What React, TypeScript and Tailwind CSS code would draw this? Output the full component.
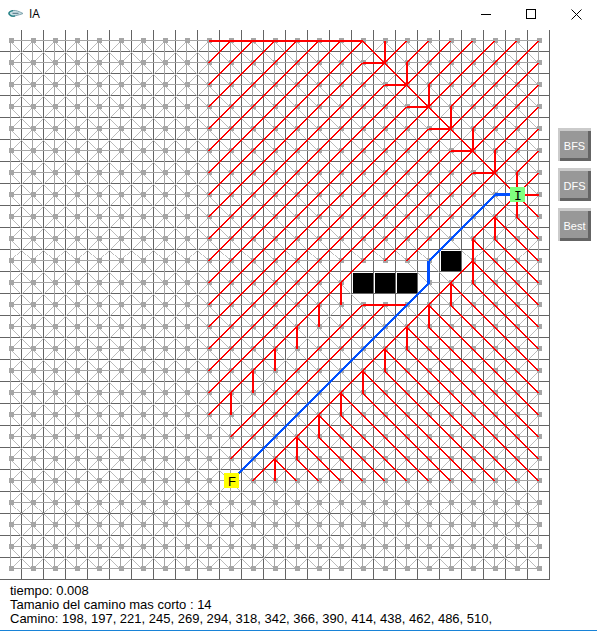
import React from "react";

type Segment = [number, number, number, number];

const SIZE = 25;
const CELL = 22;
const WALLS = [291, 292, 293, 270];
const PATH = [198, 197, 221, 245, 269, 294, 318, 342, 366, 390, 414, 438, 462, 486, 510];
const AXIS = Array.from({ length: SIZE }, (_, i) => i);

const col = (id: number) => id % SIZE;
const row = (id: number) => Math.floor(id / SIZE);
const isWall = (c: number, r: number) => WALLS.includes(r * SIZE + c);

/** Lines between every pair of neighbouring free nodes. */
function gridEdges(): { straight: string; diagonal: string } {
  let straight = "";
  let diagonal = "";
  const steps = [[1, 0], [0, 1], [1, 1], [-1, 1]];
  for (const r of AXIS) {
    for (const c of AXIS) {
      if (isWall(c, r)) continue;
      for (const [dc, dr] of steps) {
        const c2 = c + dc;
        const r2 = r + dr;
        if (c2 < 0 || c2 >= SIZE || r2 >= SIZE || isWall(c2, r2)) continue;
        const d = `M${10.5 + c * CELL} ${10.5 + r * CELL}l${dc * CELL} ${dr * CELL}`;
        if (dc !== 0 && dr !== 0) diagonal += d;
        else straight += d;
      }
    }
  }
  return { straight, diagonal };
}

/** Search tree, as runs of [column, row, column, row]. */
function searchTree(): Segment[] {
  const tree: Segment[] = [
    [9, 0, 16, 0],
    [16, 0, 23, 7],
    [16, 12, 18, 12],
    [23, 7, 24, 7],
    [23, 7, 21, 9],
    [21, 9, 21, 11],
    [21, 10, 11, 20],
    [22, 8, 22, 9],
    [23, 7, 23, 8],
    [21, 6, 17, 10],
    [22, 6, 18, 10],
    [16, 12, 10, 18],
    [17, 12, 10, 19],
  ];
  for (let c = 10; c <= 16; c++) tree.push([c, 0, 9, c - 9]);
  for (let c = 17; c <= 23; c++) {
    const r = c - 16;
    tree.push([c, r - 1, c, r]);
    if (c < 23) tree.push([c - 1, r, c, r]);
    if (c < 22) {
      tree.push([c - 1, r, 9, r + c - 10]);
      tree.push([c, r, 9, r + c - 9]);
    }
    const up = Math.min(r, 24 - c);
    tree.push([c, r, c + up, r - up]);
    const upper = Math.min(r - 1, 24 - c);
    if (upper > 0) tree.push([c, r - 1, c + upper, r - 1 - upper]);
  }
  for (let c = 10; c <= 15; c++) tree.push([c, 26 - c, c, 27 - c]);
  for (let c = 12; c <= 20; c++) tree.push([c, 31 - c, c, 32 - c]);
  const branches = [[23, 7], [23, 8], [22, 8], [22, 9], [21, 9], [21, 10], [21, 11]];
  for (let c = 12; c <= 20; c++) branches.push([c, 31 - c], [c, 32 - c]);
  for (const [c, r] of branches) {
    const n = Math.min(24 - c, 20 - r);
    if (n > 0) tree.push([c, r, c + n, r + n]);
  }
  return tree;
}

const toPath = (segments: Segment[], dx = 0, dy = 0) =>
  segments
    .map(([a, b, c, d]) => `M${11 + dx + a * CELL} ${11 + dy + b * CELL}L${11 + dx + c * CELL} ${11 + dy + d * CELL}`)
    .join("");

const isDiagonal = ([a, b, c, d]: Segment) => a !== c && b !== d;

function Board() {
  const edges = gridEdges();
  const tree = searchTree();
  const route = PATH.slice(1).map(
    (id, i): Segment => [col(PATH[i]), row(PATH[i]), col(id), row(id)],
  );
  return (
    <svg width="550" height="550" viewBox="0 0 550 550" shapeRendering="crispEdges" fill="none" role="img" aria-label="Grafo" className="block shrink-0">
      <path d={AXIS.map((i) => `M${21.5 + i * CELL} 0V550M0 ${21.5 + i * CELL}H550`).join("")} stroke="#646464" />
      <path d={edges.diagonal} stroke="#b4b4b4" strokeWidth="0.9" />
      <path d={edges.straight} stroke="#a6a6a6" />
      {AXIS.map((r) =>
        AXIS.map((c) => <rect key={r * SIZE + c} x={9 + c * CELL} y={8 + r * CELL} width="5" height="5" fill="#a6a6a6" />),
      )}
      {WALLS.map((id) => (
        <g key={id}>
          <rect x={col(id) * CELL} y={row(id) * CELL} width="21" height="21" fill="#fff" />
          <rect x={1 + col(id) * CELL} y={1 + row(id) * CELL} width="20" height="20" fill="#000" />
        </g>
      ))}
      {tree.filter(isDiagonal).map((s) => (
        <path key={s.join()} d={toPath([s], -0.5)} stroke="#f00" strokeWidth="1.8" />
      ))}
      <path d={toPath(tree.filter((s) => !isDiagonal(s)))} stroke="#f00" strokeWidth="2" />
      <path d={toPath(route.filter(isDiagonal))} stroke="#0050ff" strokeWidth="2" />
      <path d={toPath(route.filter((s) => !isDiagonal(s)), -0.5, -0.5)} stroke="#0050ff" strokeWidth="3" />
      <rect x="510" y="157" width="15" height="15" fill="#80ff80" />
      <rect x="224" y="443" width="15" height="15" fill="#ff0" />
      <text x="518" y="170" textAnchor="middle" fontSize="13" fill="#000" className="font-['DejaVu_Sans_Mono',monospace]">I</text>
      <text x="232" y="456" textAnchor="middle" fontSize="13" fill="#000" className="font-['Liberation_Sans',sans-serif]">F</text>
    </svg>
  );
}

function TitleBar() {
  return (
    <header className="flex h-[30px] items-center pb-0.5">
      <svg width="16" height="10" viewBox="0 0 16 10" className="ml-2 shrink-0" aria-hidden="true">
        <path d="M5 1.500C8 1 11 2.500 15 4.500C13 5.500 10 6 8 6.500C6 8 3 7.500 1.500 6C0 4 2 2 5 1.500Z" fill="#c9dfe4" stroke="#7fa3ae" />
        <path d="M5 1.700C1 2 0 4.500 2 6C3 7 5 7.300 7 6.800" fill="none" stroke="#1d7f83" strokeWidth="1.3" />
        <path d="M4.500 4.300h6" stroke="#4d7080" />
      </svg>
      <h1 className="ml-[5px] flex-1 font-['Open_Sans',sans-serif] text-xs">IA</h1>
      <div className="flex h-full gap-1">
        <button type="button" aria-label="Minimizar" className="flex h-full w-[41px] items-center justify-center">
          <svg width="11" height="11" shapeRendering="crispEdges"><path d="M0 5.500H10" stroke="#000" /></svg>
        </button>
        <button type="button" aria-label="Maximizar" className="flex h-full w-[41px] items-center justify-center">
          <svg width="11" height="11" shapeRendering="crispEdges"><path d="M.5 .5h9v9h-9z" fill="none" stroke="#000" /></svg>
        </button>
        <button type="button" aria-label="Cerrar" className="flex h-full w-[41px] items-center justify-center">
          <svg width="11" height="11"><path d="M.5 .5l10 10M10.500 .5l-10 10" stroke="#000" /></svg>
        </button>
      </div>
    </header>
  );
}

function ToolButton({ children }: { children: string }) {
  return (
    <button type="button" className="h-[33px] w-[33px] bg-[#989898] pt-[3px] text-[11px] leading-4 text-white shadow-[inset_2px_3px_#cbcbcb,inset_-3px_-3px_#646464]">
      {children}
    </button>
  );
}

export default function App() {
  return (
    <div className="flex min-h-screen flex-col border-b border-[#1883d7] bg-white font-['Liberation_Sans',Arial,sans-serif] text-black">
      <TitleBar />
      <main className="flex flex-1 flex-col">
        <div className="flex">
          <Board />
          <nav className="flex flex-col gap-[7px] pt-[98px] pl-2">
            <ToolButton>BFS</ToolButton>
            <ToolButton>DFS</ToolButton>
            <ToolButton>Best</ToolButton>
          </nav>
        </div>
        <div className="pt-1 pl-[10px] text-[13px] leading-[14px]">
          <p>tiempo: 0.008</p>
          <p>Tamanio del camino mas corto : 14</p>
          <p>Camino: {PATH.join(", ")},</p>
        </div>
      </main>
    </div>
  );
}
